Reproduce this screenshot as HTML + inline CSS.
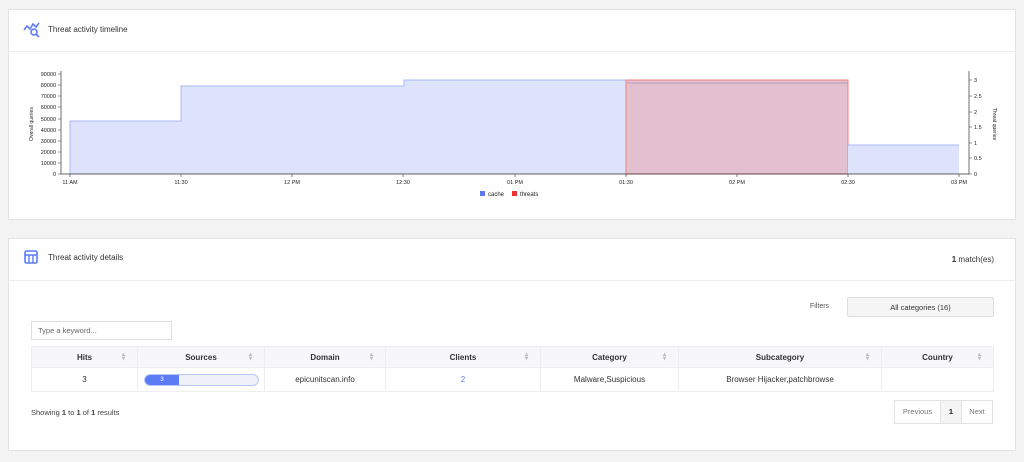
<!DOCTYPE html>
<html><head><meta charset="utf-8"><style>
body{margin:0;background:#f3f3f3;font-family:"Liberation Sans",sans-serif;color:#333;width:1024px;height:462px;position:relative;overflow:hidden}
.card{position:absolute;left:8px;width:1008px;background:#fff;border:1px solid #e3e3e3;box-sizing:border-box}
.hd{height:41px;border-bottom:1px solid #eee;position:relative;font-size:8px}
.abs{position:absolute}
table{border-collapse:collapse;position:absolute;left:31px;top:346px;width:962px;font-size:8px;table-layout:fixed}
td,th{border:1px solid #eee;text-align:center;padding:0;position:relative;box-sizing:border-box}
th{height:21px;background:#f7f7f9;font-weight:bold}
td{height:24px}
.s{position:absolute;right:12px;top:6px;color:#bbb;font-size:6px;line-height:4px}
</style></head><body>
<div class="card" style="top:9px;height:211px">
 <div class="hd">
  <svg class="abs" style="left:14px;top:11px" width="18" height="17" viewBox="0 0 18 17"><path d="M1 9 L4 5 L7 8 L10 3 L13 6 L16 2" fill="none" stroke="#5b7cf5" stroke-width="1.6"/><circle cx="11" cy="11" r="3" fill="none" stroke="#5b7cf5" stroke-width="1.6"/><path d="M13 13 L16 16" stroke="#5b7cf5" stroke-width="1.8"/></svg>
  <div class="abs" style="left:39px;top:15px">Threat activity timeline</div>
 </div>
</div>
<svg class="abs" style="left:0;top:0" width="1024" height="230">
 <g font-size="5.5" fill="#222" font-family="Liberation Sans">
 <path d="M70 174 V121 H181 V86 H404 V80 H626 V174 Z" fill="#dce3fb" stroke="none"/>
 <path d="M70 174 V121 H181 V86 H404 V80 H626" fill="none" stroke="#a9b8f5" stroke-width="1"/>
 <path d="M626 174 V80 H848 V174 Z" fill="#e3c0d0" stroke="#f07f7f" stroke-width="1"/>
 <path d="M627 83 H848" stroke="#8a7f95" stroke-width="0.6"/>
 <path d="M848 174 V145 H959 V174 Z" fill="#dce3fb"/>
 <path d="M848 145 H959" stroke="#a9b8f5"/>
 <path d="M61 71 V174 H969 V71" fill="none" stroke="#333" stroke-width="0.7"/>
 <g stroke="#333" stroke-width="0.6">
  <path d="M58 174H61M58 163H61M58 152H61M58 141H61M58 130H61M58 119H61M58 107H61M58 96H61M58 85H61M58 74H61"/>
  <path d="M969 174H972M969 158H972M969 143H972M969 127H972M969 112H972M969 96H972M969 80H972"/>
  <path d="M70 174v3M181 174v3M292 174v3M403 174v3M515 174v3M626 174v3M737 174v3M848 174v3M959 174v3"/>
 </g>
 <g text-anchor="end"><text x="56" y="176">0</text><text x="56" y="165">10000</text><text x="56" y="154">20000</text><text x="56" y="143">30000</text><text x="56" y="132">40000</text><text x="56" y="121">50000</text><text x="56" y="109">60000</text><text x="56" y="98">70000</text><text x="56" y="87">80000</text><text x="56" y="76">90000</text></g>
 <g><text x="974" y="176">0</text><text x="974" y="160">0.5</text><text x="974" y="145">1</text><text x="974" y="129">1.5</text><text x="974" y="114">2</text><text x="974" y="98">2.5</text><text x="974" y="82">3</text></g>
 <g text-anchor="middle"><text x="70" y="184">11 AM</text><text x="181" y="184">11:30</text><text x="292" y="184">12 PM</text><text x="403" y="184">12:30</text><text x="515" y="184">01 PM</text><text x="626" y="184">01:30</text><text x="737" y="184">02 PM</text><text x="848" y="184">02:30</text><text x="959" y="184">03 PM</text></g>
 <text transform="translate(33,124) rotate(-90)" text-anchor="middle" font-size="5">Overall queries</text>
 <text transform="translate(993,124) rotate(90)" text-anchor="middle" font-size="5">Threat queries</text>
 <rect x="480" y="191" width="5" height="5" fill="#5b7cf5"/><text x="488" y="196" font-size="6">cache</text>
 <rect x="512" y="191" width="5" height="5" fill="#f03030"/><text x="520" y="196" font-size="6">threats</text>
 </g>
</svg>
<div class="card" style="top:238px;height:213px">
 <div class="hd">
  <svg class="abs" style="left:15px;top:11px" width="14" height="14" viewBox="0 0 14 14"><rect x="1" y="1" width="12" height="12" rx="1.5" fill="none" stroke="#5b7cf5" stroke-width="1.6"/><path d="M1 5H13M5 5V13M9 5V13" stroke="#5b7cf5" stroke-width="1.4"/></svg>
  <div class="abs" style="left:39px;top:14px">Threat activity details</div>
  <div class="abs" style="right:21px;top:16px"><b>1</b> match(es)</div>
 </div>
</div>
<div class="abs" style="left:810px;top:303px;font-size:7px;color:#555">Filters</div>
<div class="abs" style="left:847px;top:297px;width:147px;height:20px;border:1px solid #ddd;background:#f5f5f5;box-sizing:border-box;font-size:7.5px;text-align:center;line-height:19px;border-radius:2px">All categories (16)</div>
<div class="abs" style="left:31px;top:321px;width:141px;height:19px;border:1px solid #ddd;box-sizing:border-box;font-size:7.5px;color:#666;padding-left:6px;line-height:18px">Type a keyword...</div>
<table>
<colgroup><col style="width:106px"><col style="width:127px"><col style="width:121px"><col style="width:155px"><col style="width:138px"><col style="width:203px"><col style="width:112px"></colgroup>
<tr><th>Hits<span class="s">▴<br>▾</span></th><th>Sources<span class="s">▴<br>▾</span></th><th>Domain<span class="s">▴<br>▾</span></th><th>Clients<span class="s">▴<br>▾</span></th><th>Category<span class="s">▴<br>▾</span></th><th>Subcategory<span class="s">▴<br>▾</span></th><th>Country<span class="s">▴<br>▾</span></th></tr>
<tr><td>3</td><td><div style="margin:0 5px 0 6px;height:10px;border:1px solid #b9c6f5;border-radius:6px;background:#eef1f7;position:relative;overflow:hidden"><div style="width:34px;height:10px;background:#5b7cf5;color:#fff;font-size:6px;line-height:10px">3</div></div></td><td>epicunitscan.info</td><td style="color:#5b7cf5">2</td><td>Malware,Suspicious</td><td>Browser Hijacker,patchbrowse</td><td></td></tr>
</table>
<div class="abs" style="left:31px;top:408px;font-size:7.5px;color:#444">Showing <b>1</b> to <b>1</b> of <b>1</b> results</div>
<div class="abs" style="left:894px;top:400px;height:24px;width:99px;box-sizing:border-box;display:flex;border:1px solid #e3e3e3;font-size:7.5px;line-height:22px;color:#777">
 <div style="width:45px;text-align:center;border-right:1px solid #e3e3e3">Previous</div>
 <div style="width:20px;text-align:center;border-right:1px solid #e3e3e3;background:#f5f5f5;color:#222;font-weight:bold">1</div>
 <div style="flex:1;text-align:center">Next</div>
</div>
</body></html>
